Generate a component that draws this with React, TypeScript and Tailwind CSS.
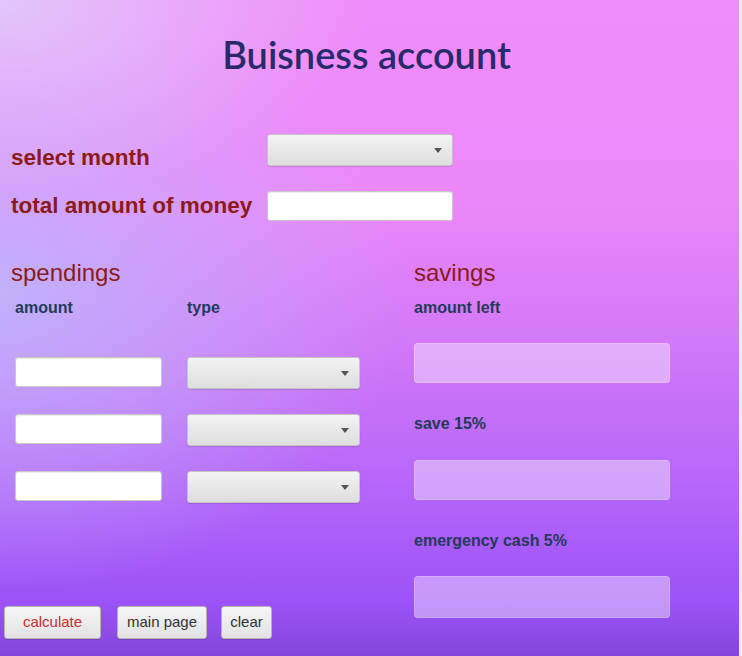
import React from 'react';

const Combo = ({ className = '' }: { className?: string }) => (
  <div
    className={`flex items-center justify-end rounded-[3px] border border-[#c4c4c4] bg-gradient-to-b from-[#f2f2f2] to-[#dedede] pr-[10px] shadow-[0_1px_1px_rgba(0,0,0,0.12)] ${className}`}
  >
    <svg width="8" height="5" viewBox="0 0 8 5">
      <path d="M0 0 L8 0 L4 5 Z" fill="#555" />
    </svg>
  </div>
);

const TextBox = ({ className = '' }: { className?: string }) => (
  <input
    type="text"
    className={`rounded-[3px] border border-[#c8c8c8] bg-white px-2 text-sm outline-none shadow-[inset_0_1px_1px_rgba(0,0,0,0.08)] ${className}`}
  />
);

const Field = ({ className = 'h-[40px]' }: { className?: string }) => (
  <div className={`w-[256px] rounded-[4px] border border-white/20 bg-white/40 ${className}`} />
);

const Btn = ({ label, className = '' }: { label: string; className?: string }) => (
  <button
    className={`h-[33px] rounded-[3px] border border-[#b4b4b4] bg-gradient-to-b from-[#f6f6f6] to-[#e2e2e2] text-[15px] shadow-[0_1px_1px_rgba(0,0,0,0.15)] ${className}`}
    style={{ fontFamily: '"Liberation Sans Narrow", "Liberation Sans", sans-serif' }}
  >
    {label}
  </button>
);

export default function App() {
  return (
    <div className="flex h-[656px] w-[742px] overflow-hidden font-['Liberation_Sans',sans-serif]">
      <div className="flex-1 bg-[radial-gradient(ellipse_50%_30%_at_0%_0%,rgba(222,212,250,0.8),transparent),radial-gradient(ellipse_55%_45%_at_0%_45%,rgba(188,186,252,0.85),transparent),linear-gradient(180deg,#f08dfa_0%,#ec88fa_30%,#cf76f8_55%,#b465f9_75%,#9c52f7_92%,#8346da_100%)]">
        <h1 className="mt-[35px] pr-[6px] text-center font-['Lato',sans-serif] text-[38px] font-semibold leading-none text-[#282a6a]">
          Buisness account
        </h1>

        <div className="mt-[61px] flex h-[32px] items-start pl-[11px]">
          <div className="mt-[13px] w-[256px] text-[22.5px] font-bold leading-[22px] text-[#8b1a1a]">
            select month
          </div>
          <Combo className="h-[32px] w-[186px]" />
        </div>

        <div className="mt-[25px] flex items-center pl-[11px]">
          <div className="w-[256px] text-[22.5px] font-bold leading-[22px] text-[#8b1a1a]">
            total amount of money
          </div>
          <TextBox className="h-[30px] w-[186px]" />
        </div>

        <div className="mt-[40px] flex">
          <div className="w-[414px]">
            <div className="pl-[11px] text-[24px] leading-[24px] text-[#8b1a1a]">spendings</div>
            <div className="mt-[15px] flex pl-[15px] text-[16px] font-bold leading-[16px] text-[#233a5a]">
              <div className="w-[172px]">amount</div>
              <div>type</div>
            </div>
            <div className="mt-[41px] flex flex-col gap-[25px] pl-[15px]">
              {[0, 1, 2].map((i) => (
                <div key={i} className="flex items-start">
                  <TextBox className="h-[30px] w-[147px]" />
                  <Combo className="ml-[25px] h-[32px] w-[173px]" />
                </div>
              ))}
            </div>
            <div className="mt-[103px] flex pl-[4px]">
              <Btn label="calculate" className="w-[97px] text-[#c53030]" />
              <Btn label="main page" className="ml-[16px] w-[90px] text-[#333]" />
              <Btn label="clear" className="ml-[14px] w-[51px] text-[#333]" />
            </div>
          </div>

          <div className="flex flex-col">
            <div className="text-[24px] leading-[24px] text-[#8b1a1a]">savings</div>
            <div className="mt-[15px] text-[16px] font-bold leading-[16px] text-[#233a5a]">amount left</div>
            <div className="mt-[27px]">
              <Field />
            </div>
            <div className="mt-[33px] text-[16px] font-bold leading-[16px] text-[#233a5a]">save 15%</div>
            <div className="mt-[28px]">
              <Field />
            </div>
            <div className="mt-[33px] text-[16px] font-bold leading-[16px] text-[#233a5a]">emergency cash 5%</div>
            <div className="mt-[27px]">
              <Field className="h-[42px]" />
            </div>
          </div>
        </div>
      </div>
      <div className="w-[3px] bg-[#efebf3]" />
    </div>
  );
}
